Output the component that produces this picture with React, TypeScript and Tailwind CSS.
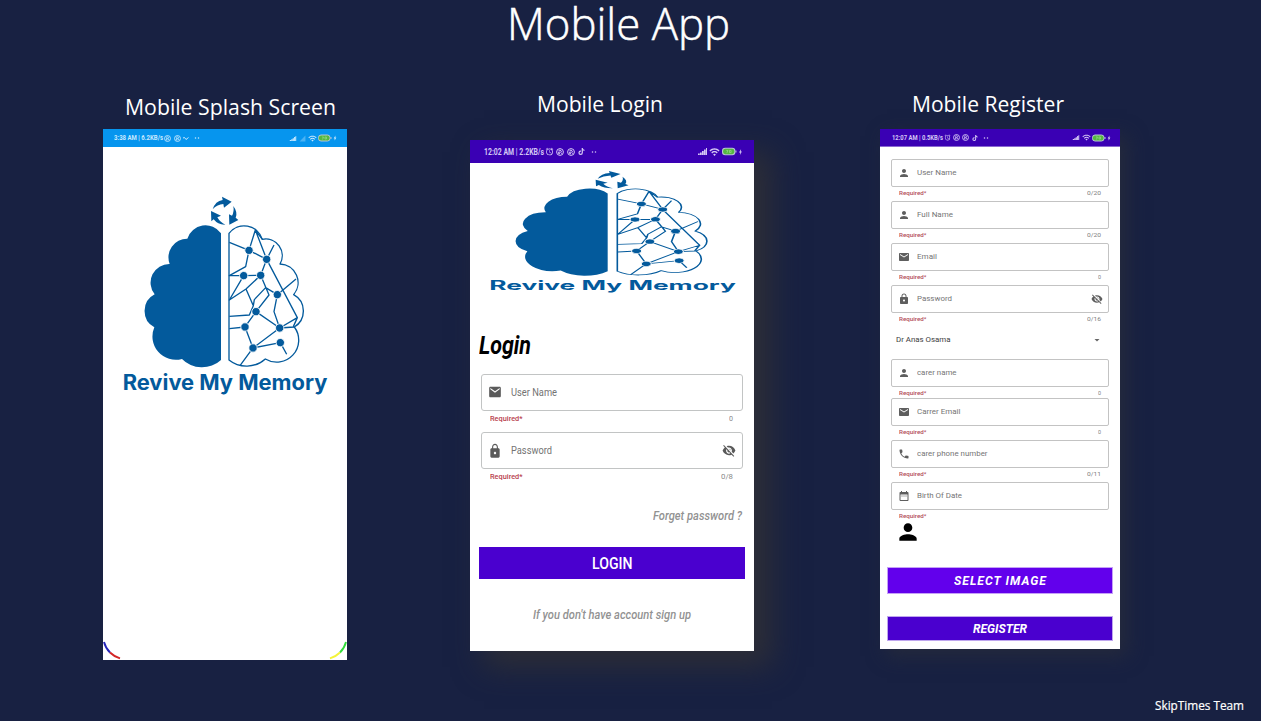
import { useLayoutEffect, useRef, type ReactNode } from "react";
import type { IconType } from "react-icons";
import {
  MdAlarm,
  MdArrowDropDown,
  MdBolt,
  MdDateRange,
  MdEmail,
  MdLock,
  MdPerson,
  MdPhone,
  MdSignalCellular4Bar,
  MdVisibilityOff,
  MdWifi,
} from "react-icons/md";
import { FaTiktok } from "react-icons/fa";

/** One line of text, stretched or squeezed horizontally to a given width. */
function FitText({
  width,
  className = "",
  children,
}: {
  width: number;
  className?: string;
  children: ReactNode;
}) {
  const inner = useRef<HTMLSpanElement>(null);
  useLayoutEffect(() => {
    const el = inner.current;
    if (!el) return;
    const natural = parseFloat(getComputedStyle(el).width);
    if (natural) el.style.transform = `scaleX(${width / natural})`;
  }, [width]);
  return (
    <span className={`block shrink-0 leading-none ${className}`} style={{ width }}>
      <span ref={inner} className="inline-block origin-left whitespace-nowrap">
        {children}
      </span>
    </span>
  );
}

const nodes = [
  [387, 196], [440, 223], [371, 272], [422, 271], [472, 329],
  [408, 380], [375, 426], [479, 429], [481, 473], [399, 489],
];

function BrainLogo({ className }: { className: string }) {
  return (
    <svg viewBox="0 30 630 604" preserveAspectRatio="none" className={className} fill="#035a9c">
      <path d="M303 145A57 57 0 0 0 202 161A56 56 0 0 0 149 237A56 56 0 0 0 104 328A56 56 0 0 0 103 427A70 70 0 0 0 186 522A80 74 0 0 0 303 525Z" />
      <g fill="none" stroke="#035a9c" strokeWidth="4" strokeLinejoin="round">
        <path d="M327 145A57 57 0 0 1 427 163A50 50 0 0 1 480 237A56 56 0 0 1 521 329A56 56 0 0 1 523 426A66 66 0 0 1 436 522A80 74 0 0 1 327 525Z" />
        <path d="M328 172L387 196L406 135L440 223L532 398L479 429L399 489L360 542M406 135L427 163M387 196L440 223L462 180M387 196L377 245L328 272L371 272L422 271L440 223M371 272L328 345L378 312L422 271L447 330L408 380L375 426L328 431M378 312L400 362L388 390L328 394M528 282L472 329L437 308L403 344L400 362M472 329L462 380L479 429L408 380M375 426L399 489L481 473L500 508M479 429L522 426M532 398L520 425" />
      </g>
      <g stroke="#fff" strokeWidth="2.5">
        {nodes.map(([x, y]) => (
          <circle key={`${x}-${y}`} cx={x} cy={y} r="12.500" />
        ))}
      </g>
      <path d="M278 73Q286 48 308 45L306 35L335 50L312 68L310 57Q292 58 278 73Z" />
      <path d="M340 63Q354 82 347 98L355 105L328 119L327 88L336 92Q343 80 340 63Z" />
      <path d="M316 119Q294 120 281 103L274 109L273 78L303 92L292 97Q300 112 316 119Z" />
      <text
        x="8"
        y="616"
        textLength="614"
        lengthAdjust="spacingAndGlyphs"
        fontFamily="Inter, sans-serif"
        fontWeight="650"
        fontSize="63"
      >
        Revive My Memory
      </text>
    </svg>
  );
}

function AppBadge({ className }: { className: string }) {
  return (
    <svg viewBox="0 0 16 16" className={className} fill="none" stroke="currentColor">
      <circle cx="8" cy="8" r="6.8" strokeWidth="2" />
      <path d="M5 5.5L8 4L11 6.5L9 8.5L5.5 8L5 11L8 11.5M10 9L11.5 11.5" strokeWidth="2" />
    </svg>
  );
}

function Dots({ className }: { className: string }) {
  return (
    <svg viewBox="0 0 12 4" className={className} fill="currentColor">
      <circle cx="3" cy="2" r="1.5" />
      <circle cx="9" cy="2" r="1.5" />
    </svg>
  );
}

function Battery({ className }: { className: string }) {
  return (
    <svg viewBox="0 0 28 16" className={className}>
      <rect x="1" y="2" width="23" height="12" rx="5" fill="#55b840" stroke="#b9c3d4" strokeWidth="2" />
      <path d="M25 6H27V10H25Z" fill="#b9c3d4" />
      <path d="M8 6H11L9 11M14 6H17V10H14Z" fill="none" stroke="#a5dd94" strokeWidth="1.2" />
    </svg>
  );
}

function SignalBars({ className }: { className: string }) {
  return (
    <svg viewBox="0 0 18 14" className={className} fill="currentColor">
      <path d="M0 11H3.500V14H0ZM4 9H7.500V14H4ZM8 6H11.500V14H8ZM12 3H15.500V14H12ZM16 0H18V14H16Z" />
    </svg>
  );
}

function Field({
  icon: Icon,
  label,
  labelWidth,
  counter,
  counterWidth = 3,
  secret,
  className = "h-[42px]",
}: {
  icon: IconType;
  label: string;
  labelWidth: number;
  counter?: string;
  counterWidth?: number;
  secret?: boolean;
  className?: string;
}) {
  return (
    <div className={`shrink-0 ${className}`}>
      <div className="flex h-7 items-center rounded-[2px] border border-[#c3c3c3] pr-[5px] pl-[6px] text-[#5e5e5e]">
        <Icon className="size-3" />
        <FitText width={labelWidth} className="ml-[7px] text-[8px] text-[#757575]">
          {label}
        </FitText>
        {secret && <MdVisibilityOff className="ml-auto size-3" />}
      </div>
      <div className="flex h-3 items-center justify-between pr-[8px] pl-[8px] text-[6.200px]">
        <FitText width={27.5} className="font-medium text-[#b34b58]">
          Required*
        </FitText>
        {counter && (
          <FitText width={counterWidth} className="text-[#808080]">
            {counter}
          </FitText>
        )}
      </div>
    </div>
  );
}

function LoginField({
  icon: Icon,
  label,
  labelWidth,
  counter,
  counterWidth,
  secret,
}: {
  icon: IconType;
  label: string;
  labelWidth: number;
  counter: string;
  counterWidth: number;
  secret?: boolean;
}) {
  return (
    <div className="h-[58.5px] shrink-0">
      <div className="flex h-[37px] items-center rounded-[3px] border border-[#c2c4c4] pr-[6px] pl-[6.5px] text-[#5a5a5a]">
        <Icon preserveAspectRatio="none" className="h-4 w-[14px]" />
        <FitText width={labelWidth} className="ml-[9px] text-[11px] text-[#737373]">
          {label}
        </FitText>
        {secret && <MdVisibilityOff preserveAspectRatio="none" className="ml-auto h-[15px] w-[14px]" />}
      </div>
      <div className="flex h-4 items-center justify-between pr-[10px] pl-[9px] text-[8px]">
        <FitText width={32.5} className="font-medium text-[#b8404d]">
          Required*
        </FitText>
        <FitText width={counterWidth} className="text-[#888]">
          {counter}
        </FitText>
      </div>
    </div>
  );
}

function SplashPhone() {
  return (
    <section className="ml-[103px] w-[244px] shrink-0">
      <h2 className="flex h-[79px] items-start pt-[46px] pl-[22px]">
        <FitText width={211} className="font-['Open_Sans'] text-[22.5px] text-white">
          Mobile Splash Screen
        </FitText>
      </h2>
      <div className="flex h-[531px] flex-col bg-white">
        <div className="flex h-[18px] shrink-0 items-center bg-[#0695ee] pr-[9px] pl-[11px] text-[#c9e9ff]">
          <FitText width={49} className="text-[6.500px] font-bold">
            3:38 AM | 6.2KB/s
          </FitText>
          <AppBadge className="ml-px size-[7px]" />
          <AppBadge className="ml-[3px] size-[7px]" />
          <svg viewBox="0 0 12 8" className="ml-[2px] h-[5px] w-[6px]" fill="none" stroke="currentColor" strokeWidth="2">
            <path d="M0 3L3 2L6 6L11 2" />
          </svg>
          <Dots className="ml-[5px] h-[2px] w-[6px]" />
          <SignalBars className="ml-auto h-[5px] w-[8px]" />
          <MdSignalCellular4Bar className="ml-[2px] size-[7px] opacity-35" />
          <MdWifi className="ml-[2px] size-[9px]" />
          <Battery className="ml-px h-[8px] w-[14px]" />
          <MdBolt className="size-[6px]" />
        </div>
        <BrainLogo className="mt-[48px] ml-[17px] h-[201.3px] w-[210px] shrink-0" />
        <div className="mt-auto flex items-end justify-between">
          <svg viewBox="0 0 18 20" className="h-5 w-[18px]" fill="none" strokeWidth="1.9">
            <path d="M1 2Q2.500 8 7 12.500" stroke="#2424b8" />
            <path d="M7 12.500Q11 16.500 17 18.300" stroke="#d32626" />
          </svg>
          <svg viewBox="0 0 18 20" className="h-5 w-[18px]" fill="none" strokeWidth="1.9">
            <path d="M17 2Q15.500 8 11 12.500" stroke="#32dc3c" />
            <path d="M11 12.500Q7 16.500 1 18.300" stroke="#f4f43a" />
          </svg>
        </div>
      </div>
    </section>
  );
}

function LoginPhone() {
  return (
    <section className="ml-[123px] w-[284px] shrink-0">
      <h2 className="flex h-[90px] items-start pt-[43px] pl-[67px]">
        <FitText width={126} className="font-['Open_Sans'] text-[22.5px] text-white">
          Mobile Login
        </FitText>
      </h2>
      <div className="flex h-[511px] flex-col bg-white shadow-[16px_14px_28px_2px_#2d2e37]">
        <div className="flex h-[23px] shrink-0 items-center bg-[#3a00b4] pr-[10px] pl-[14px] text-[#d5c8f4]">
          <FitText width={60} className="pt-px text-[8.300px] font-bold">
            12:02 AM | 2.2KB/s
          </FitText>
          <MdAlarm className="ml-px size-[9px]" />
          <AppBadge className="ml-[2px] size-[8px]" />
          <AppBadge className="ml-[3px] size-[8px]" />
          <FaTiktok className="ml-[3px] size-[7px]" />
          <Dots className="ml-[6px] h-[2px] w-[6px]" />
          <SignalBars className="ml-auto h-[7px] w-[9px]" />
          <MdWifi className="ml-[2px] h-[12px] w-[11px]" preserveAspectRatio="none" />
          <Battery className="ml-[2px] h-[9px] w-[15px]" />
          <MdBolt className="h-[8px] w-[7px]" />
        </div>
        <BrainLogo className="mt-[7px] ml-[16px] h-[123.5px] w-[253px] shrink-0" />
        <h3 className="mt-[39px] ml-[9px]">
          <FitText width={52} className="text-[25px] font-bold text-black italic">
            Login
          </FitText>
        </h3>
        <div className="mt-[16px] flex flex-col pr-[11px] pl-[10.5px]">
          <LoginField icon={MdEmail} label="User Name" labelWidth={46} counter="0" counterWidth={4} />
          <LoginField icon={MdLock} label="Password" labelWidth={41} counter="0/8" counterWidth={12} secret />
        </div>
        <div className="mt-[19px] flex justify-end pr-[12px]">
          <FitText width={89} className="text-[12.5px] font-medium text-[#929292] italic">
            Forget password ?
          </FitText>
        </div>
        <button className="mx-[9px] mt-[25px] flex h-8 shrink-0 items-center justify-center bg-[#4a00cf] text-white">
          <FitText width={40.5} className="pt-[2px] text-[16.5px] font-medium">
            LOGIN
          </FitText>
        </button>
        <div className="mt-[29.5px] flex justify-center">
          <FitText width={158} className="text-[12.5px] font-medium text-[#929292] italic">
            If you don't have account sign up
          </FitText>
        </div>
      </div>
    </section>
  );
}

function RegisterPhone() {
  return (
    <section className="ml-[126px] w-[240px] shrink-0">
      <h2 className="flex h-[79px] items-start pt-[43px] pl-[32px]">
        <FitText width={152} className="font-['Open_Sans'] text-[22.5px] text-white">
          Mobile Register
        </FitText>
      </h2>
      <div className="flex h-[520px] flex-col bg-white shadow-[7px_7px_18px_0px_#252a3c]">
        <div className="flex h-[18px] shrink-0 items-center border-b border-[#8b68d2] bg-[#3a00b4] pr-[8px] pl-[11.5px] text-[#d5c8f4]">
          <FitText width={51} className="pt-px text-[6.800px] font-bold">
            12:07 AM | 0.5KB/s
          </FitText>
          <MdAlarm className="ml-px size-[7px]" />
          <AppBadge className="ml-[2px] size-[7px]" />
          <AppBadge className="ml-[2px] size-[7px]" />
          <FaTiktok className="ml-[3px] size-[6px]" />
          <Dots className="ml-[5px] h-[2px] w-[6px]" />
          <SignalBars className="ml-auto h-[5px] w-[8px]" />
          <MdWifi className="ml-[2px] size-[9px]" />
          <Battery className="ml-px h-[8px] w-[14px]" />
          <MdBolt className="size-[6px]" />
        </div>
        <div className="flex flex-col pt-[12px] pr-[11.5px] pl-[11px]">
          <Field icon={MdPerson} label="User Name" labelWidth={39.5} counter="0/20" counterWidth={14} />
          <Field icon={MdPerson} label="Full Name" labelWidth={36} counter="0/20" counterWidth={14} />
          <Field icon={MdEmail} label="Email" labelWidth={20} counter="0" />
          <Field icon={MdLock} label="Password" labelWidth={35} counter="0/16" counterWidth={14} secret />
          <div className="flex h-8 items-center justify-between pr-[6px] pb-[7px] pl-[5px] text-[#3d3d3d]">
            <FitText width={54.5} className="text-[8px]">
              Dr Anas Osama
            </FitText>
            <MdArrowDropDown className="size-3 text-[#666]" />
          </div>
          <Field icon={MdPerson} label="carer name" labelWidth={39.5} counter="0" className="h-[39.4px]" />
          <Field icon={MdEmail} label="Carrer Email" labelWidth={43.5} counter="0" />
          <Field icon={MdPhone} label="carer phone number" labelWidth={70.5} counter="0/11" counterWidth={14} />
          <Field icon={MdDateRange} label="Birth Of Date" labelWidth={45} className="h-[39px]" />
        </div>
        <MdPerson className="-mt-[2px] ml-[14.5px] size-[26px] shrink-0 text-black" />
        <button className="mx-[7px] mt-[22px] flex h-[27px] shrink-0 items-center justify-center border border-[#c5a0f7] bg-[#6200ec] text-white">
          <FitText width={93} className="pt-px text-[12px] font-bold tracking-[1px] italic">
            SELECT IMAGE
          </FitText>
        </button>
        <button className="mx-[7px] mt-[22px] flex h-[25px] shrink-0 items-center justify-center border border-[#bfa6ee] bg-[#4a00cf] text-white">
          <FitText width={54} className="pt-px text-[12px] font-bold italic">
            REGISTER
          </FitText>
        </button>
      </div>
    </section>
  );
}

export default function App() {
  return (
    <div className="flex h-[721px] w-[1261px] flex-col overflow-hidden bg-[#182142] font-[Roboto,sans-serif]">
      <header className="flex h-[50px] shrink-0 items-start pt-[2px] pl-[507px]">
        <FitText
          width={223}
          className="font-['Open_Sans'] text-[43.500px] font-light text-white [-webkit-text-stroke:0.5px_white]"
        >
          Mobile App
        </FitText>
      </header>
      <main className="flex shrink-0 items-start">
        <SplashPhone />
        <LoginPhone />
        <RegisterPhone />
      </main>
      <footer className="mt-auto flex justify-end pr-[17px] pb-[8.5px]">
        <FitText width={89} className="font-['Open_Sans'] text-[12.5px] font-medium text-white [-webkit-text-stroke:0.2px_white]">
          SkipTimes Team
        </FitText>
      </footer>
    </div>
  );
}
